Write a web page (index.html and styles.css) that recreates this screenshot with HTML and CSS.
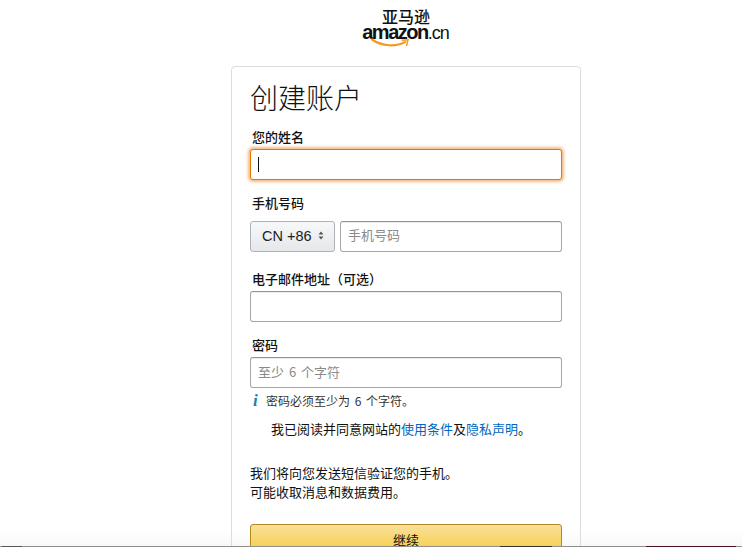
FILE: index.html
```html
<!DOCTYPE html>
<html lang="zh-CN">
<head>
<meta charset="utf-8">
<title>创建账户</title>
<link rel="stylesheet" href="styles.css">
</head>
<body>
<div class="page">
  <header class="logo">
    <div class="logo-cn">亚马逊</div>
    <div class="logo-en"><span class="logo-word">amazon</span><span class="logo-tld">.cn</span></div>
    <svg class="logo-smile" viewBox="0 0 40 11" width="40" height="11" aria-hidden="true">
      <path d="M1 1.5C11 8.5 25 9 34 4" fill="none" stroke="#f59a23" stroke-width="2.2" stroke-linecap="round"/>
      <path d="M30.5 2.2L37 1.8L35.5 8" fill="none" stroke="#f59a23" stroke-width="1.5"/>
    </svg>
  </header>
  <main class="card">
    <h1 class="title">创建账户</h1>
    <label class="label">您的姓名</label>
    <div class="input focus"><span class="caret"></span></div>
    <label class="label label-phone">手机号码</label>
    <div class="phone-row">
      <div class="country">CN +86
        <svg class="updown" viewBox="0 0 6 9" width="6" height="9" aria-hidden="true"><path d="M3 0.5L5.5 3.5H0.5ZM3 8.5L0.5 5.5H5.5Z" fill="#555"/></svg>
      </div>
      <div class="input phone"><span class="ph ph-phone">手机号码</span></div>
    </div>
    <label class="label label-mail">电子邮件地址（可选）</label>
    <div class="input"></div>
    <label class="label label-pass">密码</label>
    <div class="input"><span class="ph ph-spaced">至少 6 个字符</span></div>
    <div class="hint"><span class="hint-i">i</span><span>密码必须至少为 6 个字符。</span></div>
    <p class="agree">我已阅读并同意网站的<a href="#">使用条件</a>及<a href="#">隐私声明</a>。</p>
    <p class="sms">我们将向您发送短信验证您的手机。<br>可能收取消息和数据费用。</p>
    <button class="submit" type="button">继续</button>
  </main>
</div>
<div class="strip"><span class="strip-a"></span><span class="strip-b"></span><span class="strip-c"></span></div>
</body>
</html>
```
FILE: styles.css
```css
html, body { margin: 0; height: 547px; overflow: hidden; }
html { background: #fff; }
body { font-family: "Liberation Sans", "Noto Sans CJK SC", sans-serif; font-size: 13px; color: #111; background: linear-gradient(#fff 530px, #f8f8f8 546px); }
.page { padding-left: 231px; width: 350px; }
.logo { width: 350px; height: 66px; display: flex; flex-direction: column; align-items: center; box-sizing: border-box; padding-top: 9px; position: relative; }
.logo-cn { font: 500 16px/15px "Noto Sans CJK SC", sans-serif; color: #111; }
.logo-en { line-height: 17px; margin-top: 0; color: #111; white-space: nowrap; margin-left: -1px; }
.logo-word { font: 700 20px/17px "Liberation Sans", sans-serif; letter-spacing: -1.5px; }
.logo-tld { font: 400 18px/17px "Liberation Sans", sans-serif; letter-spacing: -1px; }
.logo-smile { position: absolute; left: 140px; top: 38px; }
.card { width: 350px; height: 520px; box-sizing: border-box; border: 1px solid #ddd; border-radius: 4px; padding: 14px 18px; }
.title { margin: 0 0 16px; font: 300 28px/32px "Noto Sans CJK SC", sans-serif; color: #111; }
.label { display: block; font: 500 13px/16px "Noto Sans CJK SC", sans-serif; padding-left: 2px; color: #111; margin-bottom: 4px; }
.input { height: 31px; box-sizing: border-box; border: 1px solid #a6a6a6; border-top-color: #949494; border-radius: 3px; display: flex; align-items: center; padding: 0 7px; background: #fff; box-shadow: 0 1px 0 rgba(0,0,0,.07) inset; }
.focus { border-color: #e77600; box-shadow: 0 0 3px 2px rgba(228,121,17,.5); }
.caret { width: 1px; height: 15px; background: #111; }
.ph { font: 400 13px/16px "Noto Sans CJK SC", sans-serif; color: #8a8a8a; margin-top: -1px; }
.ph-phone { margin-top: -3px; }
.ph-spaced { word-spacing: 2px; }
.label-phone { margin-top: 15px; margin-bottom: 10px; }
.phone-row { display: flex; gap: 5px; }
.country { width: 85px; height: 31px; box-sizing: border-box; border: 1px solid #adb1b8; border-radius: 3px; background: linear-gradient(#f7f8fa, #e5e7ea); display: flex; align-items: center; justify-content: space-between; padding: 0 10px 2px 11px; font-size: 14.5px; color: #222; }
.phone { flex: 1; }
.label-mail { margin-top: 19px; margin-bottom: 4px; }
.label-pass { margin-top: 15px; margin-bottom: 4px; }
.hint { display: flex; align-items: center; gap: 9px; margin: 4px 0 0 3px; font: 400 12px/18px "Noto Sans CJK SC", sans-serif; color: #333; word-spacing: 2px; }
.hint-i { font: italic 700 17px/18px "Liberation Serif", serif; color: #1f7fb0; width: 4px; }
.agree { margin: 10px 0 0 21px; font: 400 13px/18px "Noto Sans CJK SC", sans-serif; color: #111; }
.agree a { color: #0066c0; text-decoration: none; }
.sms { margin: 25px 0 0; font: 400 13px/19px "Noto Sans CJK SC", sans-serif; color: #111; }
.submit { display: block; width: 312px; height: 31px; margin-top: 23px; border: 1px solid #b08a1c; border-radius: 3px; background: linear-gradient(#fae09a, #f6cc40); font: 400 13px/29px "Noto Sans CJK SC", sans-serif; color: #111; padding: 0; }
.strip { position: absolute; left: 0; right: 0; top: 546px; height: 1px; background: #8f8f8f; }
.strip span { position: absolute; top: 0; height: 1px; }
.strip-a { left: 2px; width: 20px; background: #555; }
.strip-b { left: 500px; width: 52px; background: #333; }
.strip-c { left: 646px; width: 90px; background: #4a0f1c; }
```
